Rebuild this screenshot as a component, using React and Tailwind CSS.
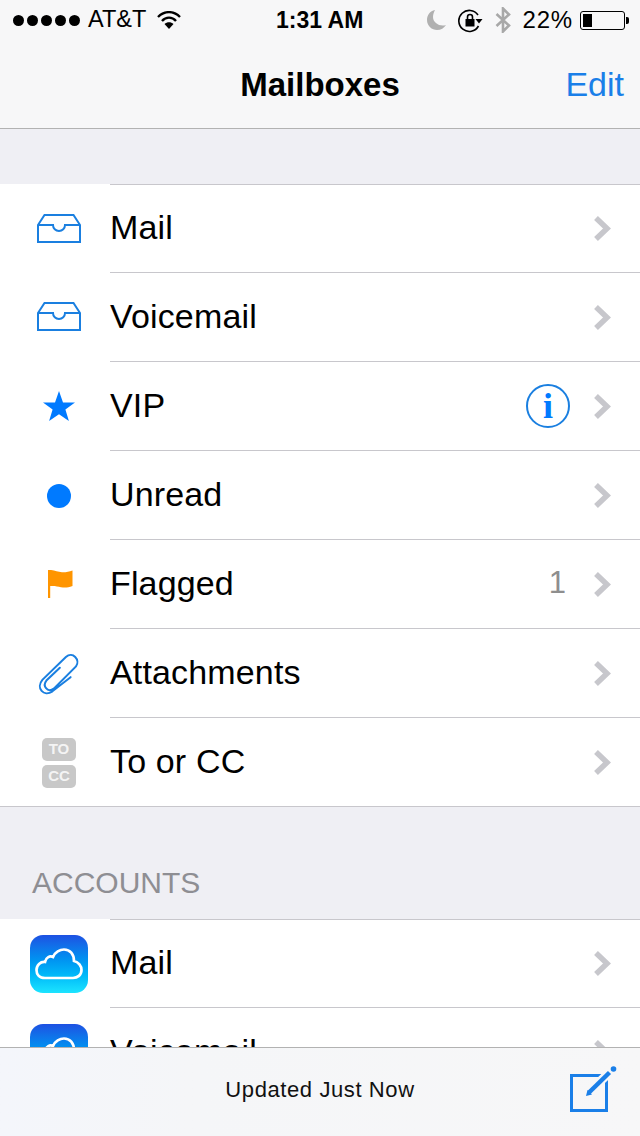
const SANS = "font-['Liberation_Sans',Arial,sans-serif]";

function Chevron() {
  return (
    <svg width="18" height="27" viewBox="0 0 18 27" className="shrink-0">
      <path d="M3 3 L14 13.5 L3 24" fill="none" stroke="#c7c7cc" strokeWidth="5.5" />
    </svg>
  );
}

function Inbox() {
  return (
    <svg width="44" height="29" viewBox="0 0 44 29">
      <path d="M7.5 1 H36.5 L43 11 V28 H1 V11 Z M1 11 H16 A6 6 0 0 0 28 11 H43" fill="none" stroke="#1a7fe0" strokeWidth="2" />
    </svg>
  );
}

function Star() {
  return (
    <svg width="32" height="30" viewBox="0 0 32 30">
      <path d="M16 0 L20 11.4 L32 11.4 L22.4 18.6 L25.9 30 L16 23.2 L6.1 30 L9.6 18.6 L0 11.4 L12 11.4 Z" fill="#007aff" />
    </svg>
  );
}

function Flag() {
  return (
    <svg width="25" height="28" viewBox="0 0 25 28" className="ml-[2px]">
      <path d="M0 0 H2.2 V28 H0 Z" fill="#ff9500" />
      <path d="M0 0 C6 -0.5 9 2 14 2.2 C18 2.4 21 1.4 24.5 0.4 V16 C20 17.6 17 18 13 17.2 C9 16.4 5 15.4 0 16.5 Z" fill="#ff9500" />
    </svg>
  );
}

function Clip() {
  return (
    <svg width="42" height="43" viewBox="55 68 125 128" className="mt-[4px]">
      <path d="M120 112 L80 150 C68 165 82 188 102 174 L168 108 C182 88 158 62 138 80 L68 148 C48 172 72 200 98 182 L152 140" fill="none" stroke="#1a7fe0" strokeWidth="6" strokeLinecap="round" />
    </svg>
  );
}

function ToCc() {
  return (
    <div className={`mt-[2px] flex flex-col gap-1 ${SANS}`}>
      <div className="flex h-[23px] w-[34px] items-center justify-center rounded-[5px] bg-[#c8c8c8] text-[15px] font-bold text-[#f4f4f4]">TO</div>
      <div className="flex h-[23px] w-[34px] items-center justify-center rounded-[5px] bg-[#c8c8c8] text-[15px] font-bold text-[#f4f4f4]">CC</div>
    </div>
  );
}

function Cloud() {
  return (
    <div className="mt-[2px] flex h-[58px] w-[58px] items-center justify-center rounded-[13px] bg-gradient-to-b from-[#1d50e2] to-[#1ce4ff]">
      <svg width="48" height="32" viewBox="0 0 48 32">
        <path d="M10 30 C4 30 1.5 26 1.5 22 C1.500 17 5.500 13.500 10 14 C11 9 15 7.500 18 9 C20 4 25 1.500 29 1.500 C35 1.500 39 6 39 13 C43.500 14 46.500 18 46.500 22 C46.500 27 42.500 30 38 30 Z" fill="none" stroke="#fff" strokeWidth="2.700" />
      </svg>
    </div>
  );
}

function InfoBadge() {
  return (
    <div className="mr-[-1px] flex h-[44px] w-[44px] items-center justify-center rounded-full border-2 border-[#1a7fe0] font-['Liberation_Serif',serif] text-[36px] font-bold leading-none text-[#007aff]">
      i
    </div>
  );
}

function Row({ icon, label, right, short }) {
  return (
    <div className={`flex bg-white ${short ? "h-[88px]" : "h-[89px]"}`}>
      <div className="flex w-[110px] shrink-0 items-center justify-center pl-[8px]">{icon}</div>
      <div className="flex min-w-0 flex-1 items-center border-t border-[#c8c7cc] pr-[29px]">
        <span className={`flex-1 whitespace-nowrap pb-[2px] text-[34px] tracking-[0.15px] text-black ${SANS}`}>{label}</span>
        {right && <div className="mr-[24px] flex items-center">{right}</div>}
        <Chevron />
      </div>
    </div>
  );
}

function StatusBar() {
  return (
    <div className={`relative flex h-[40px] items-center pl-[13px] pr-[11px] text-black ${SANS}`}>
      <div className="flex gap-[3px]">
        {[0, 1, 2, 3, 4].map((i) => (
          <span key={i} className="h-[11px] w-[11px] rounded-full bg-black" />
        ))}
      </div>
      <span className="ml-[8px] text-[23.500px] leading-none">AT&amp;T</span>
      <svg className="ml-[11px]" width="24" height="18" viewBox="0 0 24 18">
        <path d="M1 6 C7.500 -0.500 16.500 -0.500 23 6" fill="none" stroke="#000" strokeWidth="2.400" />
        <path d="M5 10 C9 5.500 15 5.500 19 10" fill="none" stroke="#000" strokeWidth="2.400" />
        <path d="M12 18 L7.500 13 C10 10.500 14 10.500 16.500 13 Z" fill="#000" />
      </svg>
      <span className="absolute left-[276px] text-[23px] font-bold leading-none">1:31 AM</span>
      <div className="ml-auto flex items-center">
        <svg width="19" height="20" viewBox="0 0 19 20">
          <path d="M8 0 C3 1 0 5 0 10 C0 16 5 20 10 20 C14 20 17 18 19 15 C13 17 6 13 6 7 C6 4 7 2 8 0 Z" fill="#b0b0b0" />
        </svg>
        <svg className="ml-[12px]" width="25" height="25" viewBox="0 0 25 25">
          <path d="M20 7 A10.500 10.500 0 1 0 20.500 18" fill="none" stroke="#000" strokeWidth="1.600" />
          <path d="M17.500 11 H24.500 L21 15.500 Z" fill="#000" />
          <rect x="7.500" y="11" width="9" height="7.500" fill="#000" />
          <path d="M9.500 11 V9 A2.500 2.500 0 0 1 14.500 9 V11" fill="none" stroke="#000" strokeWidth="1.600" />
        </svg>
        <svg className="ml-[12px]" width="16" height="26" viewBox="0 0 16 26">
          <path d="M1.500 7 L14 18.500 L8 24.500 V1.500 L14 7.500 L1.500 19" fill="none" stroke="#a8a8a8" strokeWidth="2.600" />
        </svg>
        <span className="ml-[12px] text-[24px] leading-none tracking-[0.8px]">22%</span>
        <div className="ml-[7px] flex items-center">
          <div className="flex h-[19px] w-[45px] items-center rounded-[3px] border border-black p-[2px]">
            <div className="h-full w-[9px] bg-black" />
          </div>
          <div className="ml-[1px] h-[7px] w-[3px] rounded-r-[2px] bg-black" />
        </div>
      </div>
    </div>
  );
}

function Nav() {
  return (
    <div className="shrink-0 border-b border-[#b2b2b2] bg-[#f7f7f8]">
      <StatusBar />
      <div className={`relative flex h-[88px] items-start justify-center pt-[25px] ${SANS}`}>
        <span className="text-[33px] font-bold leading-[40px] text-black">Mailboxes</span>
        <span className="absolute right-[16px] top-[24px] text-[34px] leading-[40px] text-[#1a7fe8]">Edit</span>
      </div>
    </div>
  );
}

function Toolbar() {
  return (
    <div className="absolute bottom-0 left-0 right-0 flex h-[89px] items-center justify-center border-t border-[#b2b2b2] bg-gradient-to-r from-[#f4f6fb] via-[#f5f6f8] via-30% to-[#f7f7f8]">
      <span className={`pb-[6px] text-[22px] tracking-[0.6px] text-[#111] ${SANS}`}>Updated Just Now</span>
      <svg className="absolute left-[568px] top-[11px]" width="52" height="56" viewBox="0 0 52 56">
        <rect x="3.500" y="16.500" width="35" height="35" fill="none" stroke="#1a7fe8" strokeWidth="3" />
        <path d="M19 35 L44 11" fill="none" stroke="#f7f7f8" strokeWidth="9" />
        <path d="M21 33.500 L41.500 13.500" fill="none" stroke="#1a7fe8" strokeWidth="4.500" />
        <path d="M18 37 L19.500 31 L24 35.500 Z" fill="#1a7fe8" />
        <circle cx="45.500" cy="10" r="2.800" fill="#1a7fe8" />
      </svg>
    </div>
  );
}

export default function App() {
  return (
    <div className="relative flex h-[1136px] w-[640px] flex-col overflow-hidden bg-[#efeff4]">
      <Nav />
      <div className="h-[55px] shrink-0" />
      <div className="shrink-0 border-b border-[#c8c7cc]">
        <Row short icon={<Inbox />} label="Mail" />
        <Row icon={<Inbox />} label="Voicemail" />
        <Row icon={<Star />} label="VIP" right={<InfoBadge />} />
        <Row icon={<div className="mt-[2px] h-[24px] w-[24px] rounded-full bg-[#007aff]" />} label="Unread" />
        <Row icon={<Flag />} label="Flagged" right={<span className={`mr-[3px] pb-[2px] text-[31px] text-[#8e8e8e] ${SANS}`}>1</span>} />
        <Row icon={<Clip />} label="Attachments" />
        <Row icon={<ToCc />} label="To or CC" />
      </div>
      <div className="flex h-[112px] shrink-0 items-end pb-[18px] pl-[32px]">
        <span className={`text-[30px] leading-[36px] text-[#8e8e93] ${SANS}`}>ACCOUNTS</span>
      </div>
      <div className="shrink-0 border-t border-[#c8c7cc]">
        <div className="-mt-px">
          <Row short icon={<Cloud />} label="Mail" />
          <Row icon={<Cloud />} label="Voicemail" />
        </div>
      </div>
      <Toolbar />
    </div>
  );
}
